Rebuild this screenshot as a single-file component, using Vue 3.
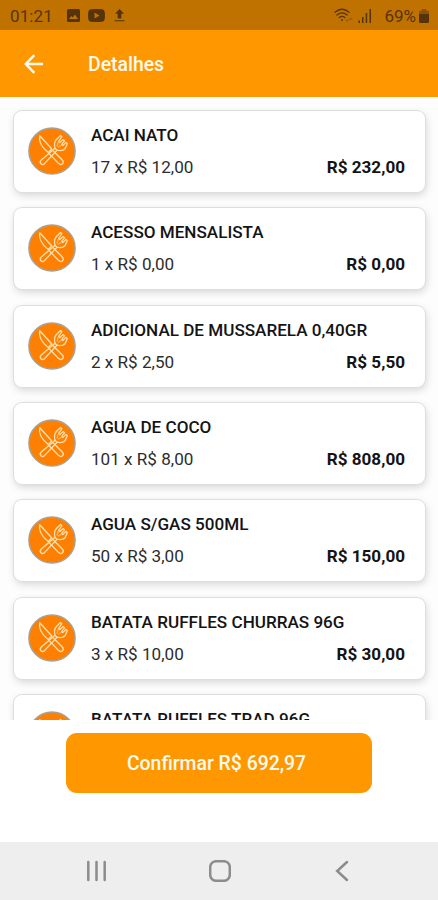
<script setup>
const items = [
  { name: 'ACAI NATO', detail: '17 x R$ 12,00', total: 'R$ 232,00' },
  { name: 'ACESSO MENSALISTA', detail: '1 x R$ 0,00', total: 'R$ 0,00' },
  { name: 'ADICIONAL DE MUSSARELA 0,40GR', detail: '2 x R$ 2,50', total: 'R$ 5,50' },
  { name: 'AGUA DE COCO', detail: '101 x R$ 8,00', total: 'R$ 808,00' },
  { name: 'AGUA S/GAS 500ML', detail: '50 x R$ 3,00', total: 'R$ 150,00' },
  { name: 'BATATA RUFFLES CHURRAS 96G', detail: '3 x R$ 10,00', total: 'R$ 30,00' },
  { name: 'BATATA RUFFLES TRAD 96G' },
]
</script>

<template>
  <div class="screen">
    <div class="status">
      <span class="clock">01:21</span>
      <svg class="st-image" width="13" height="13" viewBox="0 0 13 13">
        <path fill="currentColor" fill-rule="evenodd" d="M1.5 0h10A1.5 1.5 0 0 1 13 1.5v10a1.5 1.5 0 0 1-1.5 1.5h-10A1.5 1.5 0 0 1 0 11.500v-10A1.500 1.500 0 0 1 1.500 0zM2 10h9L8 5.500 5.800 8.600 4.300 6.900z" />
      </svg>
      <svg class="st-video" width="17" height="13" viewBox="0 0 17 13">
        <path fill="currentColor" fill-rule="evenodd" d="M3 .3Q8.500-.3 14 .3 16.500.5 16.700 3q.5 3.500 0 7-.2 2.500-2.700 2.700-5.500.6-11 0Q.5 12.500.3 10q-.5-3.500 0-7Q.500.5 3 .3zM6.500 3.500v6l5-3z" />
      </svg>
      <svg class="st-upload" width="11" height="13" viewBox="0 0 11 13">
        <path fill="currentColor" d="M5.500 0 10 4.800H7.300V9.500H3.700V4.800H1zM.5 11.200h10v1H.5z" />
      </svg>
      <span class="grow"></span>
      <svg class="st-wifi" width="20" height="15" viewBox="0 0 20 15" fill="none" stroke="currentColor" stroke-linecap="round">
        <path stroke-width="1.300" d="M1 4.300Q8-1.800 15 4.300M3 7q5-4.200 10 0M5.300 9.500q2.700-2.200 5.400 0" />
        <circle cx="8" cy="12" r=".9" fill="currentColor" stroke="none" />
        <path stroke-width="1" opacity=".6" d="m12 12 1.200 1.200 1.200-1.200M15.500 11.500l1.200-1.200 1.200 1.200" />
      </svg>
      <svg class="st-signal" width="14" height="14" viewBox="0 0 14 14" fill="currentColor">
        <path d="M.5 11.500h1.500V14H.5zM4 8h1.500v6H4zM7.700 4h1.500v10H7.700zM11.500 0H13v14h-1.500z" />
      </svg>
      <span class="percent">69%</span>
      <svg class="st-battery" width="10" height="14" viewBox="0 0 10 14" fill="currentColor">
        <path opacity=".5" d="M3 0h4v1.500h1.500Q10 2 10 3.500V5H0V3.500Q0 2 1.500 1.500H3z" />
        <path d="M0 5h10v7.500Q10 14 8.500 14h-7Q0 14 0 12.500z" />
      </svg>
    </div>

    <header class="bar">
      <svg width="20" height="20" viewBox="0 0 20 20" fill="none" stroke="#fffaf0" stroke-width="2.500">
        <path d="M19 10H2M10.300 1.200 1.800 10l8.500 8.800" />
      </svg>
      <h1>Detalhes</h1>
    </header>

    <main class="list">
      <article v-for="item in items" :key="item.name" class="card">
        <svg class="badge" width="48" height="48" viewBox="0 0 48 48">
          <circle cx="24" cy="24" r="23.100" fill="#ff8000" stroke="#aaa092" stroke-width="1.500" />
          <g fill="none" stroke="#ffe0b0" stroke-width="1.300" stroke-linecap="round" stroke-linejoin="round">
            <path d="M11.800 8.800C10.500 14.500 14.500 21 20.300 25.500L23.800 22ZM24.800 23.500 34.300 33c2.600 3-.8 6-3.600 3.600L21.500 27" />
            <path d="M27 21.200 13.300 33c-2.700 2.800.6 6 3.400 3.400L29 23.200" />
            <path d="M32.500 8.500 28.200 12.800c-1.800 2-2 5.200-1.200 8.400l2 2c3.200.8 6.200.5 8-1.500l2.300-5-1.300-1.300-3.200 3.200-1.200-1.200 3-3.500-1.300-1.300-3.500 3-1.200-1.200L33.800 9.800Z" />
            <path d="m30 15.500-.8 3.500M33 18.500l-2.500 1.500" opacity=".6" />
          </g>
        </svg>
        <div class="info">
          <div class="name">{{ item.name }}</div>
          <div v-if="item.detail" class="line">
            <span>{{ item.detail }}</span>
            <strong>{{ item.total }}</strong>
          </div>
          <div v-else class="line blank"></div>
        </div>
      </article>
    </main>

    <footer class="action">
      <button>Confirmar R$ 692,97</button>
    </footer>

    <nav class="nav">
      <svg width="22" height="22" viewBox="0 0 22 22"><path d="M2.300 2v18M10.500 2v18M18.700 2v18" /></svg>
      <svg width="22" height="22" viewBox="0 0 22 22"><rect x="1.200" y="1.200" width="19.600" height="19.600" rx="6" /></svg>
      <svg width="22" height="22" viewBox="0 0 22 22"><path d="M16 2 6.200 11l9.800 9" /></svg>
    </nav>
  </div>
</template>

<style>
body {
  margin: 0;
  background: #fff;
}
</style>

<style scoped>
.screen {
  width: 438px;
  height: 900px;
  display: flex;
  flex-direction: column;
  overflow: hidden;
  background: #fff;
  font-family: Roboto, "Liberation Sans", sans-serif;
  color: #141414;
}
.status {
  height: 30px;
  flex: none;
  box-sizing: border-box;
  padding: 1px 9px 0 10px;
  display: flex;
  align-items: center;
  background: #bf7200;
  color: #56330a;
}
.clock {
  width: 57px;
  font-size: 17px;
  letter-spacing: 0.1px;
}
.st-video { margin-left: 8px; }
.st-upload { margin-left: 9px; }
.grow { flex: 1; }
.st-wifi { margin-top: -1px; }
.st-signal { margin-left: 4px; }
.percent {
  margin-left: 12px;
  margin-right: 3px;
  font-size: 17px;
}
.bar {
  height: 67px;
  flex: none;
  display: flex;
  align-items: center;
  padding-left: 24px;
  background: #ff9800;
}
h1 {
  margin: 1px 0 0 44px;
  color: #fffaf0;
  font-size: 19.400px;
  line-height: 25px;
  font-weight: 500;
}
.list {
  height: 623px;
  flex: none;
  box-sizing: border-box;
  padding: 14px 13px 0 14px;
  display: flex;
  flex-direction: column;
  gap: 16.350px;
  overflow: hidden;
  background: #fdfdfd;
}
.card {
  height: 81px;
  flex: none;
  box-sizing: border-box;
  padding: 0 20px 1px 14px;
  display: flex;
  align-items: center;
  border-radius: 8px;
  background: #fff;
  box-shadow: 0 0 0 1px #dedede, 1px 3px 8px rgba(0, 0, 0, 0.17);
}
.badge { flex: none; }
.info {
  flex: 1;
  margin-left: 15px;
}
.name {
  margin-bottom: 12px;
  font-size: 17.100px;
  line-height: 20px;
  font-weight: 500;
  white-space: nowrap;
}
.line {
  display: flex;
  justify-content: space-between;
  font-size: 17.100px;
  line-height: 20px;
}
.line span { color: #2c2c2c; }
.line strong { font-weight: 700; }
.blank { height: 20px; }
.action {
  height: 122px;
  flex: none;
  box-sizing: border-box;
  padding-top: 13px;
  display: flex;
  justify-content: center;
  align-items: flex-start;
  background: #fff;
}
button {
  width: 306px;
  height: 60px;
  padding: 0 5px 0 0;
  border: 0;
  border-radius: 11px;
  background: #ff9800;
  color: #fffaf0;
  font: 500 19.400px Roboto, "Liberation Sans", sans-serif;
}
.nav {
  flex: 1;
  box-sizing: border-box;
  padding: 0 85px 0 86px;
  display: flex;
  align-items: center;
  justify-content: space-between;
  background: #eee;
}
.nav svg {
  fill: none;
  stroke: #8c8c8c;
  stroke-width: 2.500;
  stroke-linecap: round;
}
</style>
